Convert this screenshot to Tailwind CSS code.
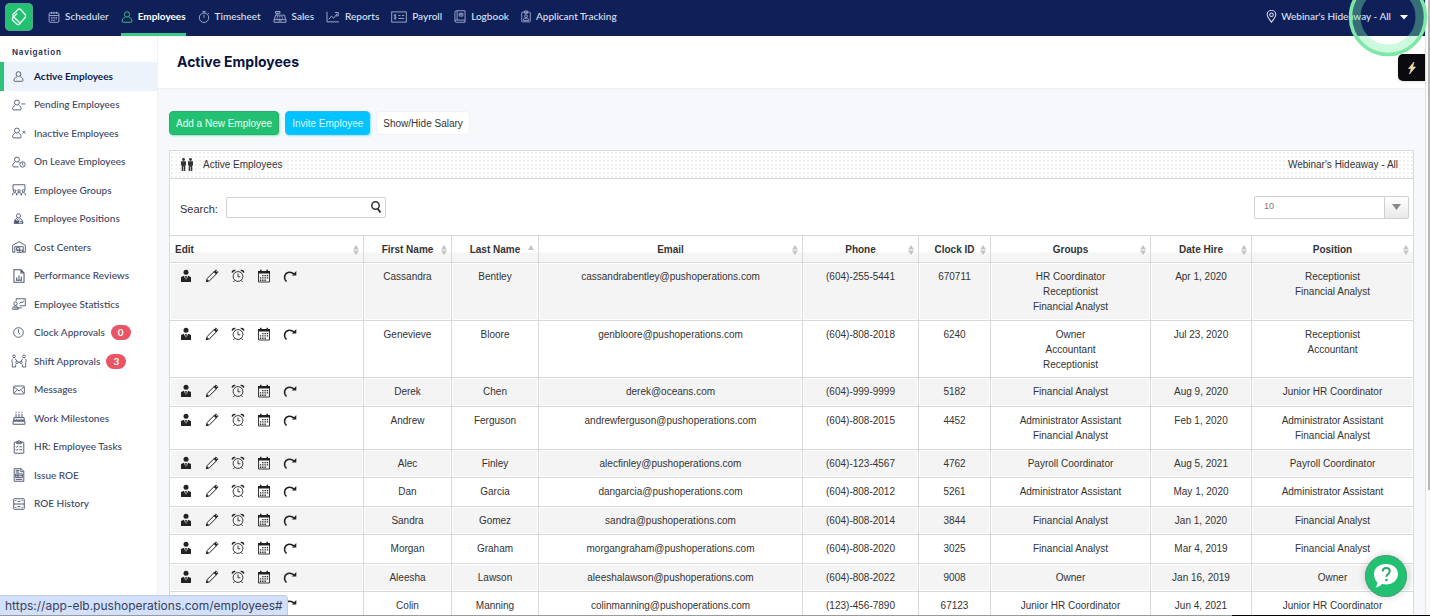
<!DOCTYPE html>
<html lang="en">
<head>
    <meta charset="UTF-8">
    <meta name="viewport" content="width=device-width, initial-scale=1.0">
    <title>Active Employees</title>
    <!-- Tailwind CSS CDN -->
    <script src="https://cdn.jsdelivr.net/npm/@tailwindcss/browser@4"></script>
</head>
<body class="bg-[#f6f8fc] text-[#333] font-['Liberation_Sans',sans-serif] text-[10px]">
    <!-- Icon sprite -->
    <svg class="hidden">
        <symbol id="i-calendar" viewBox="0 0 16 16"><rect x="1.5" y="2.5" width="13" height="12.5" rx="1.5"/><path d="M1.5 6h13M4.5 1v3M8 1v3M11.500 1v3M4 8.500h2M7 8.500h2M10 8.500h2M4 10.500h2M7 10.500h2M10 10.500h2M4 12.500h2M7 12.500h2"/></symbol>
        <symbol id="i-user" viewBox="0 0 16 16"><circle cx="8" cy="4.500" r="3.500"/><path d="M5.500 8.500C2.500 9.500 1.500 11 1.500 13.500c0 1 .500 1.500 1.500 1.500h10c1 0 1.500-.500 1.500-1.500 0-2.500-1-4-4-5"/></symbol>
        <symbol id="i-stopwatch" viewBox="0 0 16 16"><circle cx="8" cy="9" r="6.300"/><path d="M8 9V5M6 .7h4M8 .7v2M13 2.500l1.500 1.500"/></symbol>
        <symbol id="i-register" viewBox="0 0 18 16"><path d="M1 11.500h16V15H1zM1.500 11.500l1.500-6h12l1.500 6M5 5.500V3M3 .7h6V3H3zM5 7.500h1.500M8 7.500h1.500M11 7.500h1.500M4.500 9.500H6M8 9.500h1.500M11.500 9.500H13M7 13.200h4"/></symbol>
        <symbol id="i-chart" viewBox="0 0 18 16"><path d="M1 1v13.500h16M3.500 11l3.500-4 3 2.500 4.500-6M11.500 2h4.500v4.500h-3"/></symbol>
        <symbol id="i-check" viewBox="0 0 22 16"><rect x="1" y="1" width="20" height="14"/><path d="M10 6h3M15 6h3M10 10h8M7 5.500C5 4.500 4 5.500 4.500 6.700c.500 1 2.500.8 2.500 2.300 0 1.300-2 1.500-3 .5M5.700 4v8"/></symbol>
        <symbol id="i-book" viewBox="0 0 16 18"><path d="M3 1h12v16H3c-1 0-2-.6-2-1.700V3c0-1.200.8-2 2-2zM4 1v13M1 15.300C1 14.400 2 14 3 14h12M7 4.500h5v4H7zM8 6.500h3"/></symbol>
        <symbol id="i-badge" viewBox="0 0 14 17"><rect x="1" y="2.500" width="12" height="13.500" rx="1"/><path d="M5 .7h4V4H5zM3.500 14v-1.500c0-1 1-1.700 3.500-1.700s3.500.7 3.500 1.700V14z"/><circle cx="7" cy="8" r="2"/></symbol>
        <symbol id="i-pin" viewBox="0 0 14 18"><path d="M7 17C4 12.500 1 9.500 1 6.500a6 6 0 0 1 12 0c0 3-3 6-6 10.500z"/><circle cx="7" cy="6.500" r="2.500"/></symbol>
        <symbol id="i-user-minus" viewBox="0 0 20 16"><circle cx="7" cy="4.500" r="3.500"/><path d="M4.500 8.500C2 9.500 1 11 1 13.500 1 14.500 1.500 15 2.500 15h9c1 0 1.500-.5 1.500-1.500 0-2.500-1-4-3.500-5M13.500 6.500H19"/></symbol>
        <symbol id="i-user-x" viewBox="0 0 20 16"><circle cx="7" cy="4.500" r="3.500"/><path d="M4.500 8.500C2 9.500 1 11 1 13.500 1 14.500 1.500 15 2.500 15h9c1 0 1.500-.5 1.500-1.500 0-2.500-1-4-3.500-5M15 5l4 4M19 5l-4 4"/></symbol>
        <symbol id="i-user-clock" viewBox="0 0 20 16"><circle cx="7" cy="4.500" r="3.500"/><path d="M4.500 8.500C2 9.500 1 11 1 13.500 1 14.500 1.500 15 2.500 15h7M9.500 8.500l1.500.7M15 9v2.500l1.500 1"/><circle cx="15" cy="11.500" r="3.800"/></symbol>
        <symbol id="i-groups" viewBox="0 0 20 17"><path d="M1.500 9V1h17v8M1 16v-2c0-1 1-1.700 2.700-1.700S6.500 13 6.500 14v2M7 16v-2c0-1 1-1.700 3-1.700s3 .7 3 1.700v2M13.500 16v-2c0-1 1-1.700 2.800-1.700S19 13 19 14v2"/><circle cx="3.700" cy="9.700" r="1.700"/><circle cx="10" cy="9.700" r="1.700"/><circle cx="16.300" cy="9.700" r="1.700"/></symbol>
        <symbol id="i-position" viewBox="0 0 16 16"><circle cx="8" cy="4" r="3"/><path d="M6 7.500C3 9 2 10.500 1.500 15h13C14 10.500 13 9 10 7.500M6 9l2 2.500L10 9M8 11.500V15M9.500 12.500h4v2.500"/><path d="M3 11l4 1v2.500H3z" fill="currentColor"/></symbol>
        <symbol id="i-warehouse" viewBox="0 0 20 17"><path d="M1 16V6l9-5 9 5v10h-3V8H4v8zM6.500 9.500H11V13H6.500zM6.500 13H15v3H6.500M11 13v3"/></symbol>
        <symbol id="i-report" viewBox="0 0 15 18"><path d="M1 1h9l4 4v12H1zM10 1v4h4M4.500 14v-3M7.500 14V8.500M10.500 14V10M3.500 14.500h8"/></symbol>
        <symbol id="i-stats" viewBox="0 0 20 17"><path d="M6 4V1h13v10h-8M11 8l2-2.500L14.500 7 17 3.500M1 16c0-3 1-4.500 4-4.500S9 13 9 16zM3 14h11"/><circle cx="5" cy="8" r="2.500"/></symbol>
        <symbol id="i-clock" viewBox="0 0 16 16"><circle cx="8" cy="8" r="7"/><path d="M8 3.500V8.500l2.500 2"/></symbol>
        <symbol id="i-shift" viewBox="0 0 24 20"><circle cx="4.500" cy="3" r="2"/><circle cx="19.500" cy="3" r="2"/><circle cx="9" cy="12" r="1.800"/><circle cx="15" cy="12" r="1.800"/><path d="M3 6.500C1 8 1 11 2 12v7h5v-4M6 6.500C7.500 7.500 8 8.500 8.500 10M21 6.500c2 1.500 2 4.500 1 5.500v7h-5v-4M18 6.500c-1.500 1-2 2-2.500 3.500M10.500 12h3"/></symbol>
        <symbol id="i-mail" viewBox="0 0 18 14"><rect x="1" y="1" width="16" height="12" rx="1"/><path d="M1.500 2.500L9 8.500l7.500-6M1.500 12l4-4.500M16.500 12l-4-4.500"/></symbol>
        <symbol id="i-cake" viewBox="0 0 18 19"><path d="M2 9h14v4.500H2zM1 13.500h16V18H1zM5 9V4M9 9V4M13 9V4M5 2.500V1M9 2.500V1M13 2.500V1M2 12c1.500 1.500 3 0 3.500-.5C7 13 8 12.500 9 11.500c1 1 2 1.500 3.500 0 .5.500 2 2 3.500.5"/></symbol>
        <symbol id="i-clipboard" viewBox="0 0 16 19"><rect x="1.500" y="3" width="13" height="15" rx="1"/><path d="M5 2h1.500L8 .7 9.500 2H11v3H5zM4 9l1 1 1.500-2M8.500 9.200H12M4 13l1 1 1.500-2M8.500 13.200H12"/></symbol>
        <symbol id="i-roe" viewBox="0 0 15 19"><path d="M1 1h9.500L14 4.500V18H1zM10 1v4h4M3 3.500h5M3 5.500h5M3 8h9v5H3zM3 10.500h9M6 8v5M3 15.500h9"/></symbol>
        <symbol id="i-archive" viewBox="0 0 16 16"><rect x="1" y="1" width="14" height="14" rx="1"/><path d="M1 8h14M6 4.500h4M6 11.500h4M3 3.500h1.500M11.500 3.500H13M3 12.500h1.500M11.500 12.500H13"/></symbol>
        <!-- row actions -->
        <symbol id="a-profile" viewBox="0 0 14 14"><circle cx="7" cy="3.300" r="2.500"/><path d="M2 13V8l3-1.300L6.500 11 6.200 7h1.600l-.3 4L9 6.700 12 8v5z"/></symbol>
        <symbol id="a-edit" viewBox="0 0 14 14"><path d="M1.300 12.700l1-3.300L10 1.700c.6-.6 1.200-.6 1.800 0l.5.500c.6.600.6 1.200 0 1.800l-7.700 7.700zM9 2.700L11.300 5" fill="none" stroke="currentColor"/><path d="M1 13l.8-2.800 2 2zM9 2.700l1.300-1.300 2.300 2.300L11.300 5z"/></symbol>
        <symbol id="a-alarm" viewBox="0 0 14 14"><g fill="none" stroke="currentColor"><circle cx="7" cy="7.500" r="4.900" stroke-width=".9"/><path d="M7 4.500v3.300h2.300M3.500 11.500l-1.200 1.500M10.500 11.500l1.200 1.500" stroke-width=".9"/><path d="M1.300 3.700C1.500 2 2.500 1.200 4.300 1.500M12.700 3.700C12.500 2 11.500 1.200 9.700 1.500" stroke-width="1.600"/></g></symbol>
        <symbol id="a-schedule" viewBox="0 0 14 14"><path d="M1 2h12v2.500H1zM3 .8h1.500V2H3zM9.500.8H11V2H9.500z"/><path d="M1.500 4v9h11V4" fill="none" stroke="currentColor" stroke-width=".9"/><path d="M5.200 6h1.300v1.300H5.200zM7.500 6h1.300v1.300H7.500zM9.800 6h1.300v1.300H9.800zM2.900 8.300h1.300v1.300H2.900zM5.200 8.300h1.300v1.300H5.200zM7.500 8.300h1.300v1.300H7.500zM9.800 8.300h1.300v1.300H9.800zM2.900 10.600h1.300v1.300H2.900zM5.200 10.600h1.300v1.300H5.200zM7.500 10.600h1.300v1.300H7.500z"/></symbol>
        <symbol id="a-redo" viewBox="0 0 14 14"><path d="M3.500 12.500C0 9 1.500 3.700 6 3.200c2.300-.2 3.800.6 5 1.800" fill="none" stroke="currentColor" stroke-width="1.500"/><path d="M13.300 2v4.500H8.800z"/></symbol>
    </svg>

    <div class="relative flex h-screen overflow-hidden">
        <div class="flex min-w-0 flex-1 flex-col">
            <!-- Top bar -->
            <header class="flex h-9 shrink-0 bg-[#0f2059] pl-[5px] pr-[17px] font-[Lato,sans-serif] font-medium text-[#dde3f3]">
                <a href="#" aria-label="Home" class="mt-[3px] mr-[15px] flex size-7 items-center justify-center rounded-[5px] bg-[#22c172] shadow-[inset_0_0_1px_1px_#5c9f90]">
                    <svg class="size-5" viewBox="0 0 20 20" fill="none" stroke="#e8fff2" stroke-width="1.400" stroke-linejoin="round"><path d="M9.500 2L4 7.500v1.700l6.500 6.300M9.500 2l2 .2L16.500 8v2L10 17.500l-2-.3L3.500 13v-2L8 6.500"/></svg>
                </a>
                <nav id="topNav" class="flex gap-3"></nav>
                <button class="ml-auto flex h-[33px] items-center">
                    <svg class="mr-1 h-[13px] w-[11px] fill-none stroke-current stroke-[1.4]"><use href="#i-pin"/></svg>
                    Webinar's Hideaway - All
                    <svg class="ml-[9px] h-1.5 w-2 fill-white" viewBox="0 0 8 6"><path d="M0 1h8L4 5.500z"/></svg>
                </button>
            </header>

            <div class="flex min-h-0 flex-1">
                <!-- Side navigation -->
                <aside class="w-[158px] shrink-0 border-r border-[#edf0f5] bg-white font-[Lato,sans-serif] text-[#3b4664]">
                    <h2 class="flex h-[26px] items-center pt-[6px] pl-3 font-['Inter',sans-serif] text-[8px] leading-none font-semibold tracking-widest text-[#1c2850]">Navigation</h2>
                    <nav id="sideNav" class="flex h-[456px] flex-col"></nav>
                </aside>

                <main class="flex min-w-0 flex-1 flex-col">
                    <div class="flex h-[53px] shrink-0 items-center border-b border-[#edf0f5] bg-white pb-px pl-[19px]">
                        <h1 class="font-['Inter',sans-serif] text-[14px] font-bold text-[#0a1440]">Active Employees</h1>
                    </div>

                    <div class="flex flex-col pt-[22px] pr-[11px] pl-[11px]">
                        <div class="flex h-6 gap-[6px]">
                            <button class="rounded-[4px] border border-[#3aa673] bg-[#22c172] px-[6px] text-[#e9fff3] shadow-[1px_1px_2px_#7df0b8]">Add a New Employee</button>
                            <button class="rounded-[4px] border border-[#35b6e6] bg-[#00c3ff] px-[6px] text-[#dff7ff] shadow-[1px_1px_2px_#7fe6ff]">Invite Employee</button>
                            <button class="rounded-[4px] border border-[#f0f1f4] bg-white px-[6px]">Show/Hide Salary</button>
                        </div>

                        <section class="mt-[15px] border border-[#d9d9d9] bg-white">
                            <div class="flex h-7 items-center border-b border-[#d9d9d9] bg-[radial-gradient(#f1f1f1_1px,transparent_1px)] bg-[size:4px_4px] pr-[15px] pl-[10px]">
                                <svg class="mr-[9px] h-[13px] w-[14px] fill-[#333]" viewBox="0 0 14 13"><circle cx="3.500" cy="1.500" r="1.400"/><circle cx="10.500" cy="1.500" r="1.400"/><path d="M1 3.300h5v4H5.300V13H3.800V8.500h-.6V13H1.700V7.300H1zM8 3.300h5v4h-.7V13h-1.500V8.500h-.6V13H8.700V7.300H8z"/></svg>
                                <h3>Active Employees</h3>
                                <span class="ml-auto">Webinar's Hideaway - All</span>
                            </div>

                            <div class="flex h-14 items-center justify-between pr-1 pl-[10px]">
                                <div class="flex items-center">
                                    <label for="search" class="mr-2 pt-1 text-[11px]">Search:</label>
                                    <div class="relative">
                                        <input id="search" type="text" class="block h-[21px] w-[160px] rounded-[2px] border border-[#d0d0d0] bg-white pr-6 pl-2 outline-none">
                                        <svg class="absolute top-1 right-1 size-3" viewBox="0 0 12 12" fill="none" stroke="#333"><circle cx="5.500" cy="4.500" r="3.700" stroke-width="1.500"/><path d="M7.500 7.500l3 4" stroke-width="2"/></svg>
                                    </div>
                                </div>
                                <div class="relative">
                                    <select aria-label="Rows per page" class="block h-[23px] w-[155px] appearance-none rounded-[2px] border border-[#d0d0d0] bg-white pl-[9px] text-[9px] text-[#777]">
                                        <option>10</option>
                                        <option>25</option>
                                        <option>50</option>
                                    </select>
                                    <span class="pointer-events-none absolute inset-y-0 right-0 flex w-[25px] items-center justify-center rounded-r-[2px] border border-[#d0d0d0] bg-linear-to-b from-white to-[#e8e8e8]">
                                        <svg class="h-1.5 w-[9px] fill-[#888]" viewBox="0 0 9 6"><path d="M0 0h9L4.500 6z"/></svg>
                                    </span>
                                </div>
                            </div>

                            <table class="-mx-px w-[calc(100%+2px)] table-fixed border-collapse text-center leading-[15px]">
                                <colgroup>
                                    <col class="w-[194px]">
                                    <col class="w-[88px]">
                                    <col class="w-[87px]">
                                    <col>
                                    <col class="w-[116px]">
                                    <col class="w-[72px]">
                                    <col class="w-[160px]">
                                    <col class="w-[101px]">
                                    <col class="w-[162px]">
                                </colgroup>
                                <thead id="tableHead"></thead>
                                <tbody id="tableBody"></tbody>
                            </table>
                        </section>
                    </div>
                </main>
            </div>
        </div>

        <!-- Scroll track -->
        <div class="flex w-[5px] shrink-0 justify-end border-l border-[#e3e3e3] bg-[#fafafa]">
            <div class="h-[490px] w-[2px] bg-[#b5b5b5]"></div>
        </div>

        <!-- Click highlight -->
        <svg class="pointer-events-none absolute top-[-23px] right-[2px] size-20" viewBox="0 0 80 80" fill="none">
            <circle cx="40" cy="40" r="32" stroke="#7cf0a8" stroke-opacity=".38" stroke-width="9"/>
            <circle cx="40" cy="40" r="37.500" stroke="#7be8a6" stroke-width="3.500"/>
        </svg>

        <button aria-label="Quick actions" class="absolute top-[54px] right-[5px] flex h-[27px] w-[27px] items-center justify-center rounded-l-[5px] bg-[#0a0a0f] shadow-sm">
            <svg class="h-3 w-2" viewBox="0 0 8 12"><path d="M6 0L.5 6.500h2.700L1.500 12 7.500 5H4.700z" fill="#f6d78a" stroke="#fff" stroke-width=".5"/></svg>
        </button>

        <button aria-label="Help" class="absolute right-[23px] bottom-[19px] flex size-[42px] items-center justify-center rounded-full bg-[#22c172] shadow-[0_0_6px_2px_rgba(0,0,0,0.12),inset_0_0_1px_1px_#4f9f7c]">
            <svg class="size-7" viewBox="0 0 28 28"><path d="M14 2c7 0 12 4.300 12 10s-5 10.500-12 10.500c-1.500 0-2.800-.2-4-.5-1.500 1.800-3.500 3-6.500 3.500 1.200-1.500 1.800-3 1.800-5C3.200 18.500 2 15.500 2 12 2 6.300 7 2 14 2z" fill="#fff"/><path d="M10.700 9.500c0-2.200 1.400-3.500 3.500-3.500s3.600 1.300 3.600 3.200c0 2.800-3.400 2.800-3.400 5.500" fill="none" stroke="#2aa56c" stroke-width="2"/><circle cx="14.400" cy="18" r="1.300" fill="#2aa56c"/></svg>
        </button>

        <!-- Link preview -->
        <div class="absolute bottom-px left-0 flex h-5 items-center rounded-tr-[4px] border-t border-r border-[#c3cbe0] bg-[#d3e0fb] pr-1 pl-[5px] font-['Inter',sans-serif] text-[12px] text-[#39425a]">https://app-elb.pushoperations.com/employees#</div>
        <div class="absolute inset-x-0 bottom-0 flex h-px bg-[#9a9a9a]"><span class="ml-auto w-[198px] bg-black"></span></div>
    </div>

    <script>
        const topItems = [
            ['i-calendar', 'Scheduler', 'h-3 w-3'],
            ['i-user', 'Employees', 'h-3 w-3'],
            ['i-stopwatch', 'Timesheet', 'h-3 w-3'],
            ['i-register', 'Sales', 'h-3 w-[14px]'],
            ['i-chart', 'Reports', 'h-3 w-[14px]'],
            ['i-check', 'Payroll', 'h-3 w-4'],
            ['i-book', 'Logbook', 'h-[13px] w-3'],
            ['i-badge', 'Applicant Tracking', 'h-[13px] w-[10px]'],
        ];

        const sideItems = [
            ['i-user', 'Active Employees'],
            ['i-user-minus', 'Pending Employees'],
            ['i-user-x', 'Inactive Employees'],
            ['i-user-clock', 'On Leave Employees'],
            ['i-groups', 'Employee Groups'],
            ['i-position', 'Employee Positions'],
            ['i-warehouse', 'Cost Centers'],
            ['i-report', 'Performance Reviews'],
            ['i-stats', 'Employee Statistics'],
            ['i-clock', 'Clock Approvals', 0],
            ['i-shift', 'Shift Approvals', 3],
            ['i-mail', 'Messages'],
            ['i-cake', 'Work Milestones'],
            ['i-clipboard', 'HR: Employee Tasks'],
            ['i-roe', 'Issue ROE'],
            ['i-archive', 'ROE History'],
        ];
        const sideIconSize = { 'i-user': 'size-[11px]', 'i-position': 'size-[11px]', 'i-clock': 'size-[11px]', 'i-archive': 'size-3', 'i-mail': 'size-3', 'i-shift': 'size-4' };

        const columns = ['Edit', 'First Name', 'Last Name', 'Email', 'Phone', 'Clock ID', 'Groups', 'Date Hire', 'Position'];

        // row height, then one value per column
        const employees = [
            ['h-[58px]', 'Cassandra', 'Bentley', 'cassandrabentley@pushoperations.com', '(604)-255-5441', '670711', 'HR Coordinator<br>Receptionist<br>Financial Analyst', 'Apr 1, 2020', 'Receptionist<br>Financial Analyst'],
            ['h-[57px]', 'Genevieve', 'Bloore', 'genbloore@pushoperations.com', '(604)-808-2018', '6240', 'Owner<br>Accountant<br>Receptionist', 'Jul 23, 2020', 'Receptionist<br>Accountant'],
            ['h-[29px]', 'Derek', 'Chen', 'derek@oceans.com', '(604)-999-9999', '5182', 'Financial Analyst', 'Aug 9, 2020', 'Junior HR Coordinator'],
            ['h-[43px]', 'Andrew', 'Ferguson', 'andrewferguson@pushoperations.com', '(604)-808-2015', '4452', 'Administrator Assistant<br>Financial Analyst', 'Feb 1, 2020', 'Administrator Assistant<br>Financial Analyst'],
            ['h-[28px]', 'Alec', 'Finley', 'alecfinley@pushoperations.com', '(604)-123-4567', '4762', 'Payroll Coordinator', 'Aug 5, 2021', 'Payroll Coordinator'],
            ['h-[29px]', 'Dan', 'Garcia', 'dangarcia@pushoperations.com', '(604)-808-2012', '5261', 'Administrator Assistant', 'May 1, 2020', 'Administrator Assistant'],
            ['h-[28px]', 'Sandra', 'Gomez', 'sandra@pushoperations.com', '(604)-808-2014', '3844', 'Financial Analyst', 'Jan 1, 2020', 'Financial Analyst'],
            ['h-[29px]', 'Morgan', 'Graham', 'morgangraham@pushoperations.com', '(604)-808-2020', '3025', 'Financial Analyst', 'Mar 4, 2019', 'Financial Analyst'],
            ['h-[28px]', 'Aleesha', 'Lawson', 'aleeshalawson@pushoperations.com', '(604)-808-2022', '9008', 'Owner', 'Jan 16, 2019', 'Owner'],
            ['h-[29px]', 'Colin', 'Manning', 'colinmanning@pushoperations.com', '(123)-456-7890', '67123', 'Junior HR Coordinator', 'Jun 4, 2021', 'Junior HR Coordinator'],
        ];

        document.getElementById('topNav').innerHTML = topItems.map(([icon, label, size]) => {
            const active = label === 'Employees';
            return `<a href="#" class="flex items-center gap-[5px] border-b-[3px] ${active ? 'border-[#3ccb85] font-bold text-white' : 'border-transparent'}">
                <svg class="${size} fill-none stroke-[1.2] ${active ? 'stroke-[#3ccb85]' : 'stroke-[#a9b3d3]'}"><use href="#${icon}"/></svg>${label}</a>`;
        }).join('');

        document.getElementById('sideNav').innerHTML = sideItems.map(([icon, label, count], i) => `
            <a href="#" class="flex flex-1 items-center border-l-4 pl-[6px] ${i === 0 ? 'border-[#2fc07a] bg-[#edf3fa] font-bold text-[#0f1b47]' : 'border-transparent font-medium'}">
                <span class="mr-[7px] flex w-[17px] justify-center"><svg class="${sideIconSize[icon] || 'size-[14px]'} shrink-0 fill-none stroke-[#4a556f] stroke-[1.3]"><use href="#${icon}"/></svg></span>${label}
                ${count !== undefined ? `<span class="ml-[6px] flex h-[15px] w-5 items-center justify-center rounded-full bg-[#ea5464] font-bold text-white">${count}</span>` : ''}
            </a>`).join('');

        document.getElementById('tableHead').innerHTML = '<tr>' + columns.map((name, i) => `
            <th class="h-[27px] border border-[#d9d9d9] bg-linear-to-b from-white from-60% to-[#f5f5f5] to-60% p-0">
                <div class="relative ${i === 0 ? 'pl-[5px] text-left' : ''}">${name}
                    <svg class="absolute top-[3px] right-1 h-[10px] w-[6px] fill-[#c4c4c4]" viewBox="0 0 6 10"><path d="${name === 'Last Name' ? 'M3 0l3 5H0z' : 'M3 0l3 4.500H0zM0 5.500h6L3 10z'}"/></svg>
                </div>
            </th>`).join('') + '</tr>';

        const actions = [['a-profile', 'Profile'], ['a-edit', 'Edit'], ['a-alarm', 'Punches'], ['a-schedule', 'Schedule'], ['a-redo', 'Transfer']];
        const actionCell = '<div class="flex gap-3 pl-[9px]">' + actions.map(([icon, label]) =>
            `<a href="#" aria-label="${label}"><svg class="size-[14px] fill-current text-[#222]"><use href="#${icon}"/></svg></a>`).join('') + '</div>';

        document.getElementById('tableBody').innerHTML = employees.map(([height, ...cells]) => `
            <tr class="${height} align-top odd:bg-[#f4f4f4]">
                ${[actionCell, ...cells].map(c => `<td class="border border-[#d9d9d9] px-0 pt-[6px] pb-0 shadow-[inset_0_0_0_1px_#fff]">${c}</td>`).join('')}
            </tr>`).join('');
    </script>
</body>
</html>
